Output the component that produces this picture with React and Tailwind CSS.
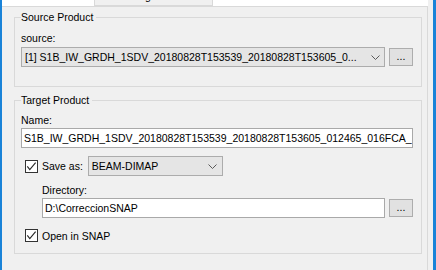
const Check = () => (
  <svg width="13" height="13" viewBox="0 0 13 13" className="shrink-0">
    <rect x="0.5" y="0.5" width="12" height="12" fill="#ffffff" stroke="#333333" />
    <path d="M2.3 6.3 L4.8 9.6 L10.6 2.6" fill="none" stroke="#262626" strokeWidth="1.1" />
  </svg>
);

const Chevron = () => (
  <svg width="9" height="5" viewBox="0 0 9 5" className="shrink-0">
    <path d="M0.5 0.5 L4.5 4.5 L8.5 0.5" fill="none" stroke="#5a5a5a" strokeWidth="1" />
  </svg>
);

const Dots = () => (
  <div className="w-[24px] h-[18px] shrink-0 bg-[#e1e1e1] border border-[#adadad] flex items-center justify-center leading-[12px] pb-[2px]">
    ...
  </div>
);

const Group = ({ title, className, children }) => (
  <fieldset className={`min-w-0 border border-[#d9d9d9] pl-[6px] pr-[8px] ${className}`}>
    <legend className="leading-[13px] pr-[3px]">{title}</legend>
    {children}
  </fieldset>
);

export default function App() {
  return (
    <div className="w-[436px] h-[270px] overflow-hidden bg-[#f0f0f0] flex text-[10.5px] text-black font-['Liberation_Sans',Arial,sans-serif]">
      <div className="w-[2px] bg-[#1a83d8]" />

      <div className="w-[426px] flex flex-col">
        <div className="h-[7px] shrink-0 bg-white border-b border-[#d9d9d9] flex items-start">
          <div className="ml-[92px] w-[119px] h-[6px] bg-[#f0f0f0] border-x border-b border-[#d9d9d9] overflow-hidden flex justify-center">
            <span className="leading-[12px] mt-[-10px] whitespace-nowrap">Processing Parameters</span>
          </div>
        </div>

        <div className="flex-1 border-r border-[#d9d9d9] pl-[12px] pr-[5px] pt-[4px] flex flex-col">
          <Group title="Source Product" className="pt-[8px] pb-[19px]">
            <div className="leading-[12px]">source:</div>
            <div className="mt-[3px] flex items-center gap-[4px]">
              <div className="w-[364px] h-[20px] bg-[#e5e5e5] border border-[#acacac] flex items-center justify-between pl-[3px] pr-[4px]">
                <span className="leading-[12px] whitespace-nowrap">[1] S1B_IW_GRDH_1SDV_20180828T153539_20180828T153605_0...</span>
                <Chevron />
              </div>
              <Dots />
            </div>
          </Group>

          <Group title="Target Product" className="mt-[7px] pt-[7px] pb-[11px]">
            <div className="leading-[12px]">Name:</div>
            <div className="mt-[2px] h-[20px] bg-white border border-[#a9a9a9] flex items-center pl-[2px] overflow-hidden">
              <span className="leading-[12px] whitespace-nowrap">S1B_IW_GRDH_1SDV_20180828T153539_20180828T153605_012465_016FCA_</span>
            </div>

            <div className="mt-[8px] h-[20px] flex items-center pl-[4px]">
              <Check />
              <span className="ml-[4px] leading-[12px]">Save as:</span>
              <div className="ml-[5px] w-[135px] h-[20px] bg-[#e5e5e5] border border-[#acacac] flex items-center justify-between pl-[3px] pr-[5px]">
                <span className="leading-[12px]">BEAM-DIMAP</span>
                <Chevron />
              </div>
            </div>

            <div className="ml-[21px] mt-[8px] leading-[12px]">Directory:</div>
            <div className="ml-[21px] mt-[2px] flex items-center gap-[4px]">
              <div className="w-[343px] h-[20px] bg-white border border-[#a9a9a9] flex items-center pl-[2px]">
                <span className="leading-[12px]">D:\CorreccionSNAP</span>
              </div>
              <Dots />
            </div>

            <div className="mt-[11px] flex items-center pl-[4px]">
              <Check />
              <span className="ml-[4px] leading-[12px]">Open in SNAP</span>
            </div>
          </Group>
        </div>
      </div>

      <div className="w-[5px]" />
      <div className="w-[3px] bg-[#1a83d8]" />
    </div>
  );
}
